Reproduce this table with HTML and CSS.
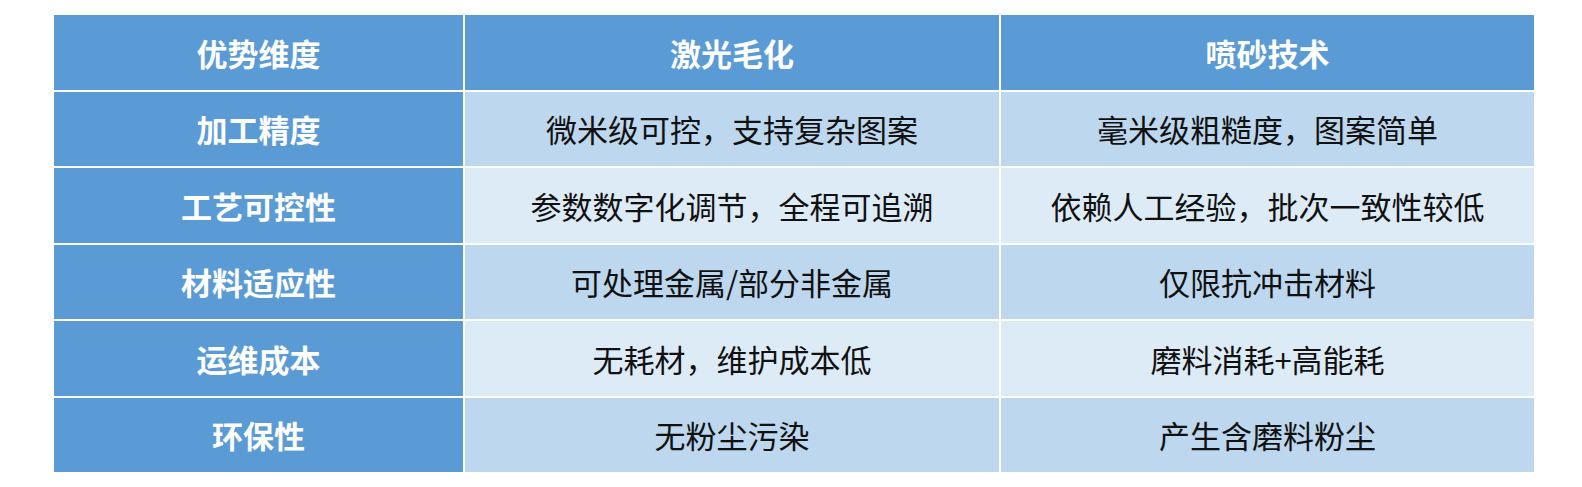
FILE: index.html
```html
<!DOCTYPE html>
<html lang="zh-CN">
<head>
<meta charset="utf-8">
<title>激光毛化 vs 喷砂技术</title>
<link rel="stylesheet" href="styles.css">
</head>
<body>
<div class="table">
  <div class="cell head">优势维度</div>
  <div class="cell head">激光毛化</div>
  <div class="cell head">喷砂技术</div>

  <div class="cell key">加工精度</div>
  <div class="cell odd">微米级可控，支持复杂图案</div>
  <div class="cell odd">毫米级粗糙度，图案简单</div>

  <div class="cell key">工艺可控性</div>
  <div class="cell even">参数数字化调节，全程可追溯</div>
  <div class="cell even">依赖人工经验，批次一致性较低</div>

  <div class="cell key">材料适应性</div>
  <div class="cell odd">可处理金属/部分非金属</div>
  <div class="cell odd">仅限抗冲击材料</div>

  <div class="cell key">运维成本</div>
  <div class="cell even">无耗材，维护成本低</div>
  <div class="cell even">磨料消耗+高能耗</div>

  <div class="cell key">环保性</div>
  <div class="cell odd">无粉尘污染</div>
  <div class="cell odd">产生含磨料粉尘</div>
</div>
</body>
</html>
```

FILE: styles.css
```css
html, body {
  margin: 0;
  padding: 0;
  background: #ffffff;
}

body {
  padding: 15px 0 0 54px;
  font-family: "Microsoft YaHei", "Noto Sans CJK SC", "Noto Sans", sans-serif;
}

.table {
  display: grid;
  grid-template-columns: 409px 534px 533px;
  grid-template-rows: repeat(6, 74.5px);
  gap: 2px;
  width: 1480px;
  background: #ffffff;
}

.cell {
  display: flex;
  align-items: center;
  justify-content: center;
  font-size: 31px;
  line-height: 1;
  color: #111111;
  white-space: nowrap;
}

.head,
.key {
  background: #5b9bd5;
  color: #ffffff;
  font-weight: 700;
}

.odd {
  background: #bdd7ee;
}

.even {
  background: #ddebf7;
}
```
